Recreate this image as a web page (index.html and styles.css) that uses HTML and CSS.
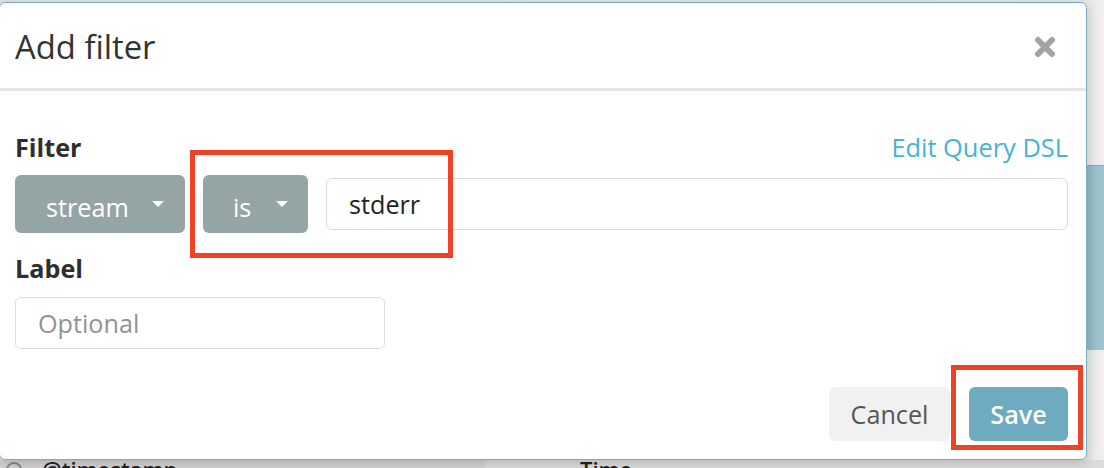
FILE: index.html
```html
<!DOCTYPE html>
<html>
<head>
<meta charset="utf-8">
<title>Add filter</title>
<link rel="stylesheet" href="styles.css">
</head>
<body>
<div class="page">
  <div class="bg-top"></div>
  <div class="bg-band"></div>
  <div class="bg-mid"></div>
  <div class="bg-thead">
    <div class="th th-time"><span class="clock"></span><span>@timestamp</span></div>
    <div class="th th-rest"><span>Time</span></div>
  </div>

  <div class="modal">
    <div class="modal-header">
      <h3 class="modal-title">Add filter</h3>
      <button class="close" aria-label="Close">
        <svg width="22" height="22" viewBox="0 0 22 22"><path d="M4 4 L18 18 M18 4 L4 18" stroke="#a1a4a7" stroke-width="6" stroke-linecap="round" fill="none"/></svg>
      </button>
    </div>
    <div class="modal-body">
      <div class="label-row">
        <span class="field-label">Filter</span>
        <a class="dsl-link">Edit Query DSL</a>
      </div>
      <div class="filter-row">
        <button class="select-btn btn-stream"><span class="btn-text">stream</span><span class="caret"></span></button>
        <button class="select-btn btn-is"><span class="btn-text">is</span><span class="caret"></span></button>
        <input class="text-input value-input" type="text" value="stderr">
      </div>
      <span class="field-label label-second">Label</span>
      <input class="text-input optional-input" type="text" placeholder="Optional">
    </div>
    <div class="modal-footer">
      <button class="btn btn-cancel">Cancel</button>
      <button class="btn btn-save">Save</button>
    </div>
    <div class="annot annot-1"></div>
    <div class="annot annot-2"></div>
  </div>
</div>
</body>
</html>
```

FILE: styles.css
```css
* { box-sizing: border-box; }
html, body { margin: 0; padding: 0; }
body {
  font-family: "Open Sans", "Liberation Sans", sans-serif;
  background: #e8e8e8;
}
.page {
  position: relative;
  width: 1104px;
  height: 468px;
  overflow: hidden;
  display: flex;
  flex-direction: column;
  background: linear-gradient(to right, #e2e2e2 0, #e6e6e6 1086px, #f0f0f0 1104px);
}
.page > div { flex-shrink: 0; }
.bg-top { height: 165px; }
.bg-band {
  height: 185px;
  background: linear-gradient(to right, #94b8c5 1086px, #a3c4cf 1104px);
  border-top: 1px solid #86abb9;
}
.bg-mid { height: 110px; }
.bg-thead {
  height: 30px;
  display: flex;
  font-size: 22px;
  font-weight: 600;
  color: #222;
  line-height: 18px;
}
.th { padding-top: 0; }
.th-time {
  width: 485px;
  background: #d2d2d2;
  display: flex;
  gap: 20px;
  padding-left: 6px;
}
.th-rest {
  flex: 1;
  background: #dcdcdc;
  padding-left: 95px;
}
.clock {
  width: 16px;
  height: 16px;
  border: 2px solid #888;
  border-radius: 50%;
  margin-top: 2px;
}

.modal {
  position: absolute;
  top: 2px;
  left: -1px;
  width: 1088px;
  background: #fff;
  border: 1px solid #74adc2;
  border-radius: 6px;
  box-shadow: 0 3px 12px rgba(0, 0, 0, 0.18);
  color: #2e2e2e;
}
.modal-header {
  display: flex;
  justify-content: space-between;
  align-items: center;
  padding: 21px 18px 19px 15px;
  border-bottom: 3px solid #e5e5e5;
}
.modal-title {
  margin: 0;
  font-size: 32.8px;
  font-weight: 400;
  line-height: 45px;
  color: #333;
}
.close {
  border: 0;
  background: none;
  padding: 0;
  margin-right: 12px;
  width: 22px;
  height: 22px;
  display: block;
}
.close svg { display: block; }

.modal-body {
  padding: 39px 18px 0 15px;
}
.label-row {
  display: flex;
  justify-content: space-between;
  line-height: 35px;
  height: 35px;
}
.field-label {
  font-size: 25.2px;
  font-weight: 700;
  color: #2e2e2e;
  line-height: 35px;
  display: block;
}
.dsl-link {
  font-size: 25.4px;
  color: #45b2d6;
  line-height: 35px;
}
.filter-row {
  margin-top: 10px;
  display: flex;
  align-items: center;
  gap: 18px;
}
.select-btn {
  height: 58px;
  border: 0;
  border-radius: 6px;
  background: #95a5a6;
  color: #fff;
  font-family: inherit;
  font-size: 25.2px;
  display: flex;
  align-items: center;
  flex: none;
}
.btn-stream { width: 170px; padding: 0 21px 0 31px; gap: 22px; }
.btn-is { width: 105px; padding: 0 20px 0 30px; gap: 22px; }
.btn-text { line-height: 35px; padding-top: 6px; }
.caret {
  width: 0;
  height: 0;
  border-left: 6px solid transparent;
  border-right: 6px solid transparent;
  border-top: 6px solid #fff;
  margin-left: auto;
}
.text-input {
  height: 52px;
  border: 1px solid #dcdcdc;
  border-radius: 6px;
  padding: 0 20px 0 22px;
  font-family: inherit;
  font-size: 25.2px;
  color: #222;
  background: #fff;
  outline: none;
}
.text-input::placeholder { color: #929292; }
.value-input { flex: 1; min-width: 0; }
.label-second { margin-top: 18px; }
.optional-input {
  display: block;
  margin-top: 11px;
  width: 370px;
}

.modal-footer {
  display: flex;
  justify-content: flex-end;
  gap: 19px;
  padding: 38px 18px 18px 15px;
}
.btn {
  height: 54px;
  border: 0;
  border-radius: 6px;
  font-family: inherit;
  font-size: 25.2px;
  line-height: 35px;
}
.btn-cancel {
  width: 121px;
  background: #f1f1f1;
  color: #555;
}
.btn-save {
  width: 99px;
  background: #6eabc1;
  color: #fff;
  font-weight: 600;
}

.annot {
  position: absolute;
  border: 5px solid #ee4326;
}
.annot-1 { left: 190px; top: 147px; width: 263px; height: 108px; }
.annot-2 { left: 951px; top: 362px; width: 132px; height: 85px; }
```
